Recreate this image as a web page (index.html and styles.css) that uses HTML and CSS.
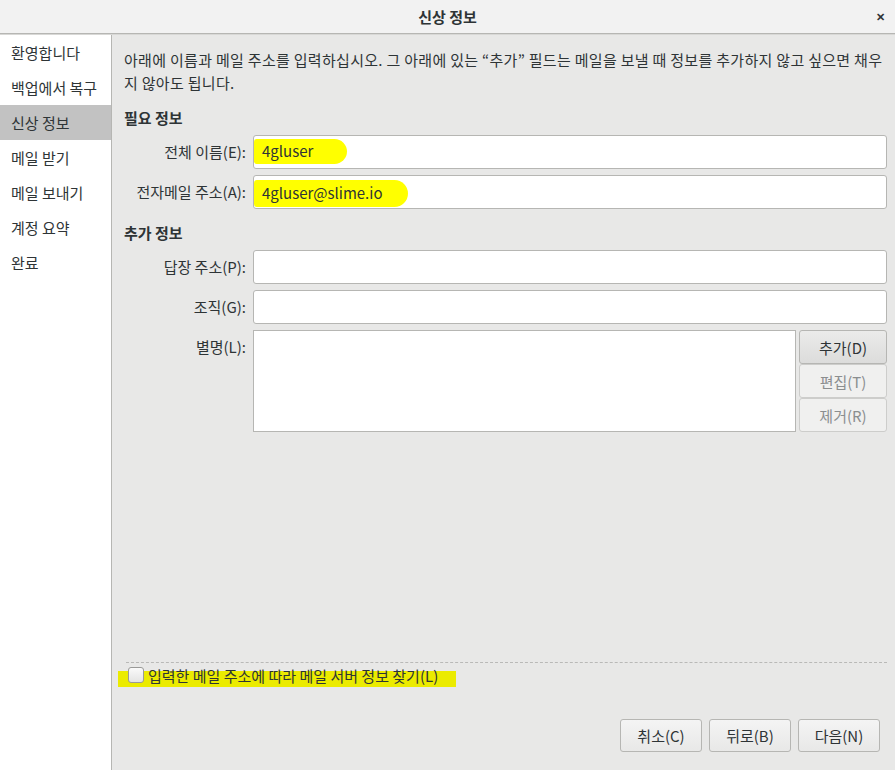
FILE: index.html
```html
<!DOCTYPE html>
<html>
<head>
    <title>신상 정보</title>
    <link rel="stylesheet" href="styles.css">
</head>
<body>
    <div class="titlebar">
        <span class="title">신상 정보</span>
        <span class="close">✕</span>
    </div>
    <div class="content">
        <ul class="steps">
            <li>환영합니다</li>
            <li>백업에서 복구</li>
            <li class="current">신상 정보</li>
            <li>메일 받기</li>
            <li>메일 보내기</li>
            <li>계정 요약</li>
            <li>완료</li>
        </ul>
        <div class="page">
            <p class="intro">아래에 이름과 메일 주소를 입력하십시오. 그 아래에 있는 “추가” 필드는 메일을 보낼 때 정보를 추가하지 않고 싶으면 채우지 않아도 됩니다.</p>

            <h3>필요 정보</h3>
            <div class="form">
                <label>전체 이름(E):</label>
                <div class="entry"><span class="mark mark-name">4gluser</span></div>
                <label>전자메일 주소(A):</label>
                <div class="entry"><span class="mark mark-mail">4gluser@slime.io</span></div>
            </div>

            <h3>추가 정보</h3>
            <div class="form">
                <label>답장 주소(P):</label>
                <div class="entry"></div>
                <label>조직(G):</label>
                <div class="entry"></div>
                <label>별명(L):</label>
                <div class="alias">
                    <div class="list"></div>
                    <div class="side-buttons">
                        <button class="btn pressed">추가(D)</button>
                        <button class="btn" disabled>편집(T)</button>
                        <button class="btn" disabled>제거(R)</button>
                    </div>
                </div>
            </div>

            <div class="spacer"></div>

            <div class="separator"></div>
            <label class="check">
                <span class="check-mark"></span>
                <span class="box"></span>
                <span class="check-text">입력한 메일 주소에 따라 메일 서버 정보 찾기(L)</span>
            </label>

            <div class="actions">
                <button class="btn">취소(C)</button>
                <button class="btn">뒤로(B)</button>
                <button class="btn">다음(N)</button>
            </div>
        </div>
    </div>
</body>
</html>
```

FILE: styles.css
```css
html, body {
    height: 100%;
}

body {
    margin: 0;
    display: flex;
    flex-direction: column;
    background: #e8e8e7;
    color: #2e3436;
    font-family: "Noto Sans CJK KR", "Noto Sans", sans-serif;
    font-size: 15px;
    overflow: hidden;
}

.titlebar {
    position: relative;
    height: 33px;
    display: flex;
    align-items: center;
    justify-content: center;
    background: #f2f2f2;
    border-bottom: 1px solid #b6b6b3;
    box-shadow: 0 1px 0 #d8d8d6;
}

.title {
    font-weight: bold;
    font-size: 15px;
}

.close {
    position: absolute;
    right: 10px;
    top: 8px;
    font-size: 11px;
    font-weight: bold;
    color: #2e3436;
}

.content {
    flex: 1;
    display: flex;
    margin-top: 1px;
}

.steps {
    list-style: none;
    margin: 0;
    padding: 0;
    width: 111px;
    background: #ffffff;
    border-right: 1px solid #b6b6b3;
}

.steps li {
    height: 35px;
    line-height: 35px;
    padding-left: 11px;
}

.steps li.current {
    background: #c2c2c2;
}

.page {
    flex: 1;
    display: flex;
    flex-direction: column;
    padding: 13px 8px 18px 12px;
}

.intro {
    margin: 0;
    line-height: 23px;
    letter-spacing: 0.3px;
    word-break: break-all;
}

h3 {
    margin: 14px 0 7px;
    font-size: 15px;
    line-height: 20px;
    font-weight: bold;
}

.form {
    display: grid;
    grid-template-columns: 122px 1fr;
    column-gap: 7px;
    row-gap: 6px;
}

.form label {
    text-align: right;
    line-height: 34px;
    white-space: nowrap;
}

.entry {
    height: 32px;
    background: #ffffff;
    border: 1px solid #b6b6b3;
    border-radius: 3px;
    display: flex;
    align-items: center;
    overflow: hidden;
}

.mark {
    display: inline-block;
    line-height: 20px;
    background: #ffff00;
    border-radius: 3px 14px 14px 3px;
}

.mark-name {
    padding: 2px 34px 3px 8px;
    margin-top: -2px;
}

.mark-mail {
    padding: 3px 26px 4px 8px;
    margin-top: 2px;
}

.alias {
    display: flex;
    gap: 3px;
}

.list {
    flex: 1;
    height: 100px;
    background: #ffffff;
    border: 1px solid #b6b6b3;
}

.side-buttons {
    width: 88px;
    display: flex;
    flex-direction: column;
}

.btn {
    height: 33px;
    font-family: inherit;
    font-size: 15px;
    color: #2e3436;
    background: linear-gradient(#f4f4f4, #e8e8e7);
    border: 1px solid #b6b6b3;
    border-radius: 3px;
    padding: 0;
}

.side-buttons .btn {
    height: 34px;
}

.btn.pressed {
    background: linear-gradient(#ebebea, #dcdcdb);
}

.btn:disabled {
    color: #8b8e8f;
    background: #f0f0ef;
    border-color: #cdcdcb;
}

.spacer {
    flex: 1;
}

.separator {
    margin-left: 2px;
    border-top: 1px dashed #b9b9b7;
}

.check {
    position: relative;
    display: flex;
    align-items: center;
    gap: 4px;
    margin-top: 2px;
    padding-left: 4px;
    height: 20px;
}

.check-mark {
    position: absolute;
    left: -6px;
    top: 6px;
    width: 338px;
    height: 16px;
    background: #ebeb00;
}

.box {
    position: relative;
    width: 14px;
    height: 14px;
    border: 1px solid #9a9a98;
    border-radius: 3px;
    background: linear-gradient(#fafafa, #e4e4e3);
}

.check-text {
    position: relative;
}

.actions {
    display: flex;
    justify-content: flex-end;
    gap: 7px;
    margin-top: 34px;
    padding-right: 7px;
}

.actions .btn {
    width: 82px;
}
```
